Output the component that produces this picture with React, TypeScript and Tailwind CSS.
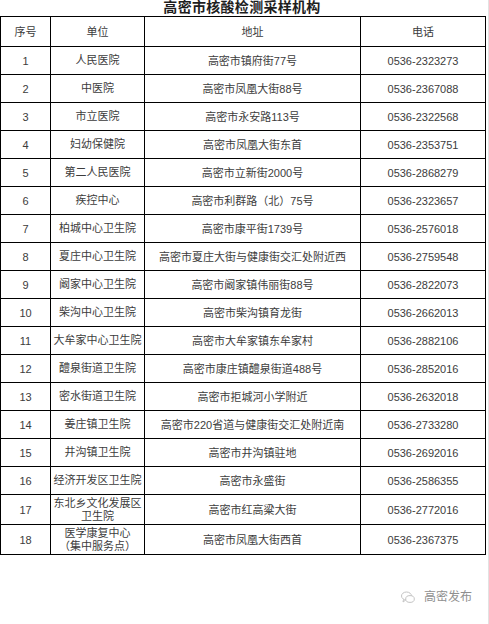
const rows: [string, string[], string, string][] = [
  ['1', ['人民医院'], '高密市镇府街77号', '0536-2323273'],
  ['2', ['中医院'], '高密市凤凰大街88号', '0536-2367088'],
  ['3', ['市立医院'], '高密市永安路113号', '0536-2322568'],
  ['4', ['妇幼保健院'], '高密市凤凰大街东首', '0536-2353751'],
  ['5', ['第二人民医院'], '高密市立新街2000号', '0536-2868279'],
  ['6', ['疾控中心'], '高密市利群路（北）75号', '0536-2323657'],
  ['7', ['柏城中心卫生院'], '高密市康平街1739号', '0536-2576018'],
  ['8', ['夏庄中心卫生院'], '高密市夏庄大街与健康街交汇处附近西', '0536-2759548'],
  ['9', ['阚家中心卫生院'], '高密市阚家镇伟丽街88号', '0536-2822073'],
  ['10', ['柴沟中心卫生院'], '高密市柴沟镇育龙街', '0536-2662013'],
  ['11', ['大牟家中心卫生院'], '高密市大牟家镇东牟家村', '0536-2882106'],
  ['12', ['醴泉街道卫生院'], '高密市康庄镇醴泉街道488号', '0536-2852016'],
  ['13', ['密水街道卫生院'], '高密市拒城河小学附近', '0536-2632018'],
  ['14', ['姜庄镇卫生院'], '高密市220省道与健康街交汇处附近南', '0536-2733280'],
  ['15', ['井沟镇卫生院'], '高密市井沟镇驻地', '0536-2692016'],
  ['16', ['经济开发区卫生院'], '高密市永盛街', '0536-2586355'],
  ['17', ['东北乡文化发展区', '卫生院'], '高密市红高粱大街', '0536-2772016'],
  ['18', ['医学康复中心', '（集中服务点）'], '高密市凤凰大街西首', '0536-2367375'],
];

const cell = 'border border-black text-center align-middle p-0';

function WeChatMark() {
  return (
    <svg width="14" height="13" viewBox="0 0 14 13" fill="none" stroke="#c4c4c4" strokeWidth="1">
      <ellipse cx="5.5" cy="5" rx="5" ry="4" />
      <ellipse cx="9" cy="8" rx="4.3" ry="3.4" fill="#fff" />
      <path d="M2.5 8.5 L2 11 L4.5 9.2" />
    </svg>
  );
}

export default function App() {
  return (
    <div
      className="relative h-[624px] w-[489px] border-r border-[#e2e2e2] bg-white text-[#3c3c3c]"
      style={{ fontFamily: '"Liberation Sans", "Noto Sans CJK SC", sans-serif' }}
    >
      <h1
        className="h-4 w-[484px] text-center text-[14px] leading-4 font-bold tracking-[0.3px] text-[#1e1e1e]"
        style={{ fontFamily: '"Liberation Serif", "Noto Sans CJK SC", serif' }}
      >
        高密市核酸检测采样机构
      </h1>

      <table className="w-[485px] table-fixed border-collapse text-[11px] leading-[14px]">
        <colgroup>
          <col className="w-[50px]" />
          <col className="w-[94px]" />
          <col className="w-[216px]" />
          <col className="w-[125px]" />
        </colgroup>
        <thead>
          <tr className="h-[30px]">
            <th className={`${cell} font-normal`}>序号</th>
            <th className={`${cell} font-normal`}>单位</th>
            <th className={`${cell} font-normal`}>地址</th>
            <th className={`${cell} font-normal`}>电话</th>
          </tr>
        </thead>
        <tbody>
          {rows.map(([no, unit, addr, tel]) => (
            <tr key={no} className={unit.length > 1 ? 'h-[30px]' : 'h-[28px]'}>
              <td className={cell}>{no}</td>
              <td className={`${cell} leading-[13px]`}>
                {unit.map((u) => (
                  <div key={u}>{u}</div>
                ))}
              </td>
              <td className={cell}>{addr}</td>
              <td className={cell}>{tel}</td>
            </tr>
          ))}
        </tbody>
      </table>

      <div className="absolute right-[16px] bottom-[18px] flex items-center gap-[9px] text-[12px] text-[#8f8f8f]">
        <WeChatMark />
        <span>高密发布</span>
      </div>
    </div>
  );
}
